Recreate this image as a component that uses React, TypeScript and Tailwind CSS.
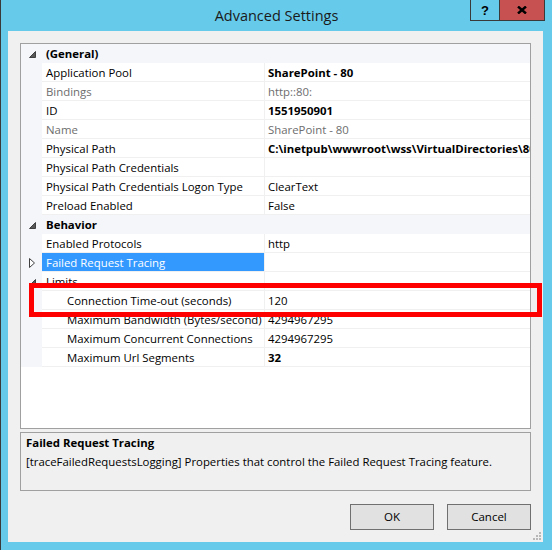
import React from "react";

type RowDef = {
  label: string;
  value?: string;
  kind?: "cat" | "prop";
  gray?: boolean;
  bold?: boolean;
  indent?: boolean;
  selected?: boolean;
  glyph?: "expanded" | "collapsed";
};

const rows: RowDef[] = [
  { label: "(General)", kind: "cat", glyph: "expanded" },
  { label: "Application Pool", value: "SharePoint - 80", bold: true },
  { label: "Bindings", value: "http::80:", gray: true },
  { label: "ID", value: "1551950901", bold: true },
  { label: "Name", value: "SharePoint - 80", gray: true },
  { label: "Physical Path", value: "C:\\inetpub\\wwwroot\\wss\\VirtualDirectories\\80", bold: true },
  { label: "Physical Path Credentials", value: "" },
  { label: "Physical Path Credentials Logon Type", value: "ClearText" },
  { label: "Preload Enabled", value: "False" },
  { label: "Behavior", kind: "cat", glyph: "expanded" },
  { label: "Enabled Protocols", value: "http" },
  { label: "Failed Request Tracing", value: "", selected: true, glyph: "collapsed" },
  { label: "Limits", value: "", glyph: "expanded" },
  { label: "Connection Time-out (seconds)", value: "120", indent: true },
  { label: "Maximum Bandwidth (Bytes/second)", value: "4294967295", indent: true },
  { label: "Maximum Concurrent Connections", value: "4294967295", indent: true },
  { label: "Maximum Url Segments", value: "32", indent: true, bold: true },
];

function Glyph({ type }: { type?: "expanded" | "collapsed" }) {
  if (type === "expanded") {
    return (
      <svg width="7" height="7" viewBox="0 0 7 7" className="block">
        <polygon points="6.5,0.5 6.5,6.5 0.5,6.5" fill="#595959" stroke="#404040" strokeWidth="1" />
      </svg>
    );
  }
  if (type === "collapsed") {
    return (
      <svg width="6" height="10" viewBox="0 0 6 10" className="block">
        <polygon points="0.5,0.5 5.5,5 0.5,9.5" fill="#ffffff" stroke="#404040" strokeWidth="1" />
      </svg>
    );
  }
  return null;
}

function Row({ r }: { r: RowDef }) {
  if (r.kind === "cat") {
    return (
      <div className="flex h-[19px] bg-[#f4f6fa]">
        <div className="w-[21px] shrink-0 flex items-center pl-[8px] pt-[1px]">
          <Glyph type={r.glyph} />
        </div>
        <div className="flex-1 flex items-center pl-[4px] pt-[1px] font-bold text-black">{r.label}</div>
      </div>
    );
  }
  return (
    <div className="flex h-[19px]">
      <div className="w-[21px] shrink-0 bg-[#f4f6fa] flex items-center pl-[8px] pt-[1px]">
        <Glyph type={r.glyph} />
      </div>
      <div
        className={
          "w-[222px] shrink-0 flex items-center pt-[1px] border-b border-[#f0f0f0] whitespace-nowrap overflow-hidden " +
          (r.indent ? "pl-[25px] " : "pl-[4px] ") +
          (r.selected ? "bg-[#3399ff] text-white border-[#3399ff] " : r.gray ? "bg-white text-[#6d6d6d] " : "bg-white text-black ")
        }
      >
        {r.label}
      </div>
      <div className="w-px shrink-0 bg-[#f0f0f0]" />
      <div
        className={
          "flex-1 min-w-0 flex items-center pt-[1px] pl-[3px] bg-white border-b border-[#f0f0f0] whitespace-nowrap overflow-hidden " +
          (r.bold ? "font-bold " : "") +
          (r.gray ? "text-[#6d6d6d]" : "text-black")
        }
      >
        {r.value}
      </div>
    </div>
  );
}

export default function App() {
  return (
    <div className="relative w-[552px] h-[550px] bg-[#66cbea] border-l border-[#3a3a3a] flex flex-col font-['Open_Sans','Noto_Sans',sans-serif] text-[11.4px] text-black overflow-hidden">
      {/* Title bar */}
      <div className="h-[31px] shrink-0 grid grid-cols-[1fr_auto_1fr]">
        <div />
        <div className="pt-[6px] text-[14.5px] leading-[20px] text-[#1a1a1a]">Advanced Settings</div>
        <div className="flex justify-end items-start pr-[7px]">
          <div className="w-[29px] h-[21px] border-l border-b border-[#3a3a3a] flex items-center justify-center font-bold text-[13px] leading-none font-['Liberation_Sans',sans-serif]">
            ?
          </div>
          <div className="w-[46px] h-[21px] bg-[#c75050] border-x border-b border-[#3a3a3a] flex items-center justify-center">
            <svg width="10" height="8" viewBox="0 0 10 8">
              <path d="M1 0.5 L9 7.5 M9 0.5 L1 7.5" stroke="#000" strokeWidth="2.4" />
            </svg>
          </div>
        </div>
      </div>

      {/* Client area */}
      <div className="relative flex-1 ml-[7px] mr-[9px] mb-[8px] bg-[#f0f0f0] pl-[12px] pr-[12px] pt-[12px] flex flex-col">
        {/* Property grid */}
        <div className="h-[386px] shrink-0 border border-[#a0a0a0] bg-white flex flex-col overflow-hidden">
          {rows.map((r, i) => (
            <Row key={i} r={r} />
          ))}
        </div>

        {/* Description */}
        <div className="mt-[3px] h-[59px] shrink-0 border border-[#a0a0a0] bg-[#f0f0f0] px-[5px] pt-[0px] leading-[19px]">
          <div className="font-bold">Failed Request Tracing</div>
          <div>[traceFailedRequestsLogging] Properties that control the Failed Request Tracing feature.</div>
        </div>

        {/* Buttons */}
        <div className="mt-[13px] flex justify-end gap-[13px]">
          <button className="w-[84px] h-[26px] border border-[#707070] bg-[#e1e1e1] text-[11.5px] text-black">OK</button>
          <button className="w-[84px] h-[26px] border border-[#707070] bg-[#e1e1e1] text-[11.5px] text-black">Cancel</button>
        </div>

        {/* resize grip */}
        <svg className="absolute right-[1px] bottom-[1px]" width="9" height="9" viewBox="0 0 9 9">
          <rect x="6" y="0" width="2" height="2" fill="#b8b8b8" />
          <rect x="3" y="3" width="2" height="2" fill="#b8b8b8" />
          <rect x="6" y="3" width="2" height="2" fill="#b8b8b8" />
          <rect x="0" y="6" width="2" height="2" fill="#b8b8b8" />
          <rect x="3" y="6" width="2" height="2" fill="#b8b8b8" />
          <rect x="6" y="6" width="2" height="2" fill="#b8b8b8" />
        </svg>
      </div>

      {/* Red highlight annotation */}
      <div className="absolute left-[28px] top-[283px] w-[513px] h-[34px] border-[5px] border-[#ff0000] pointer-events-none" />
    </div>
  );
}
